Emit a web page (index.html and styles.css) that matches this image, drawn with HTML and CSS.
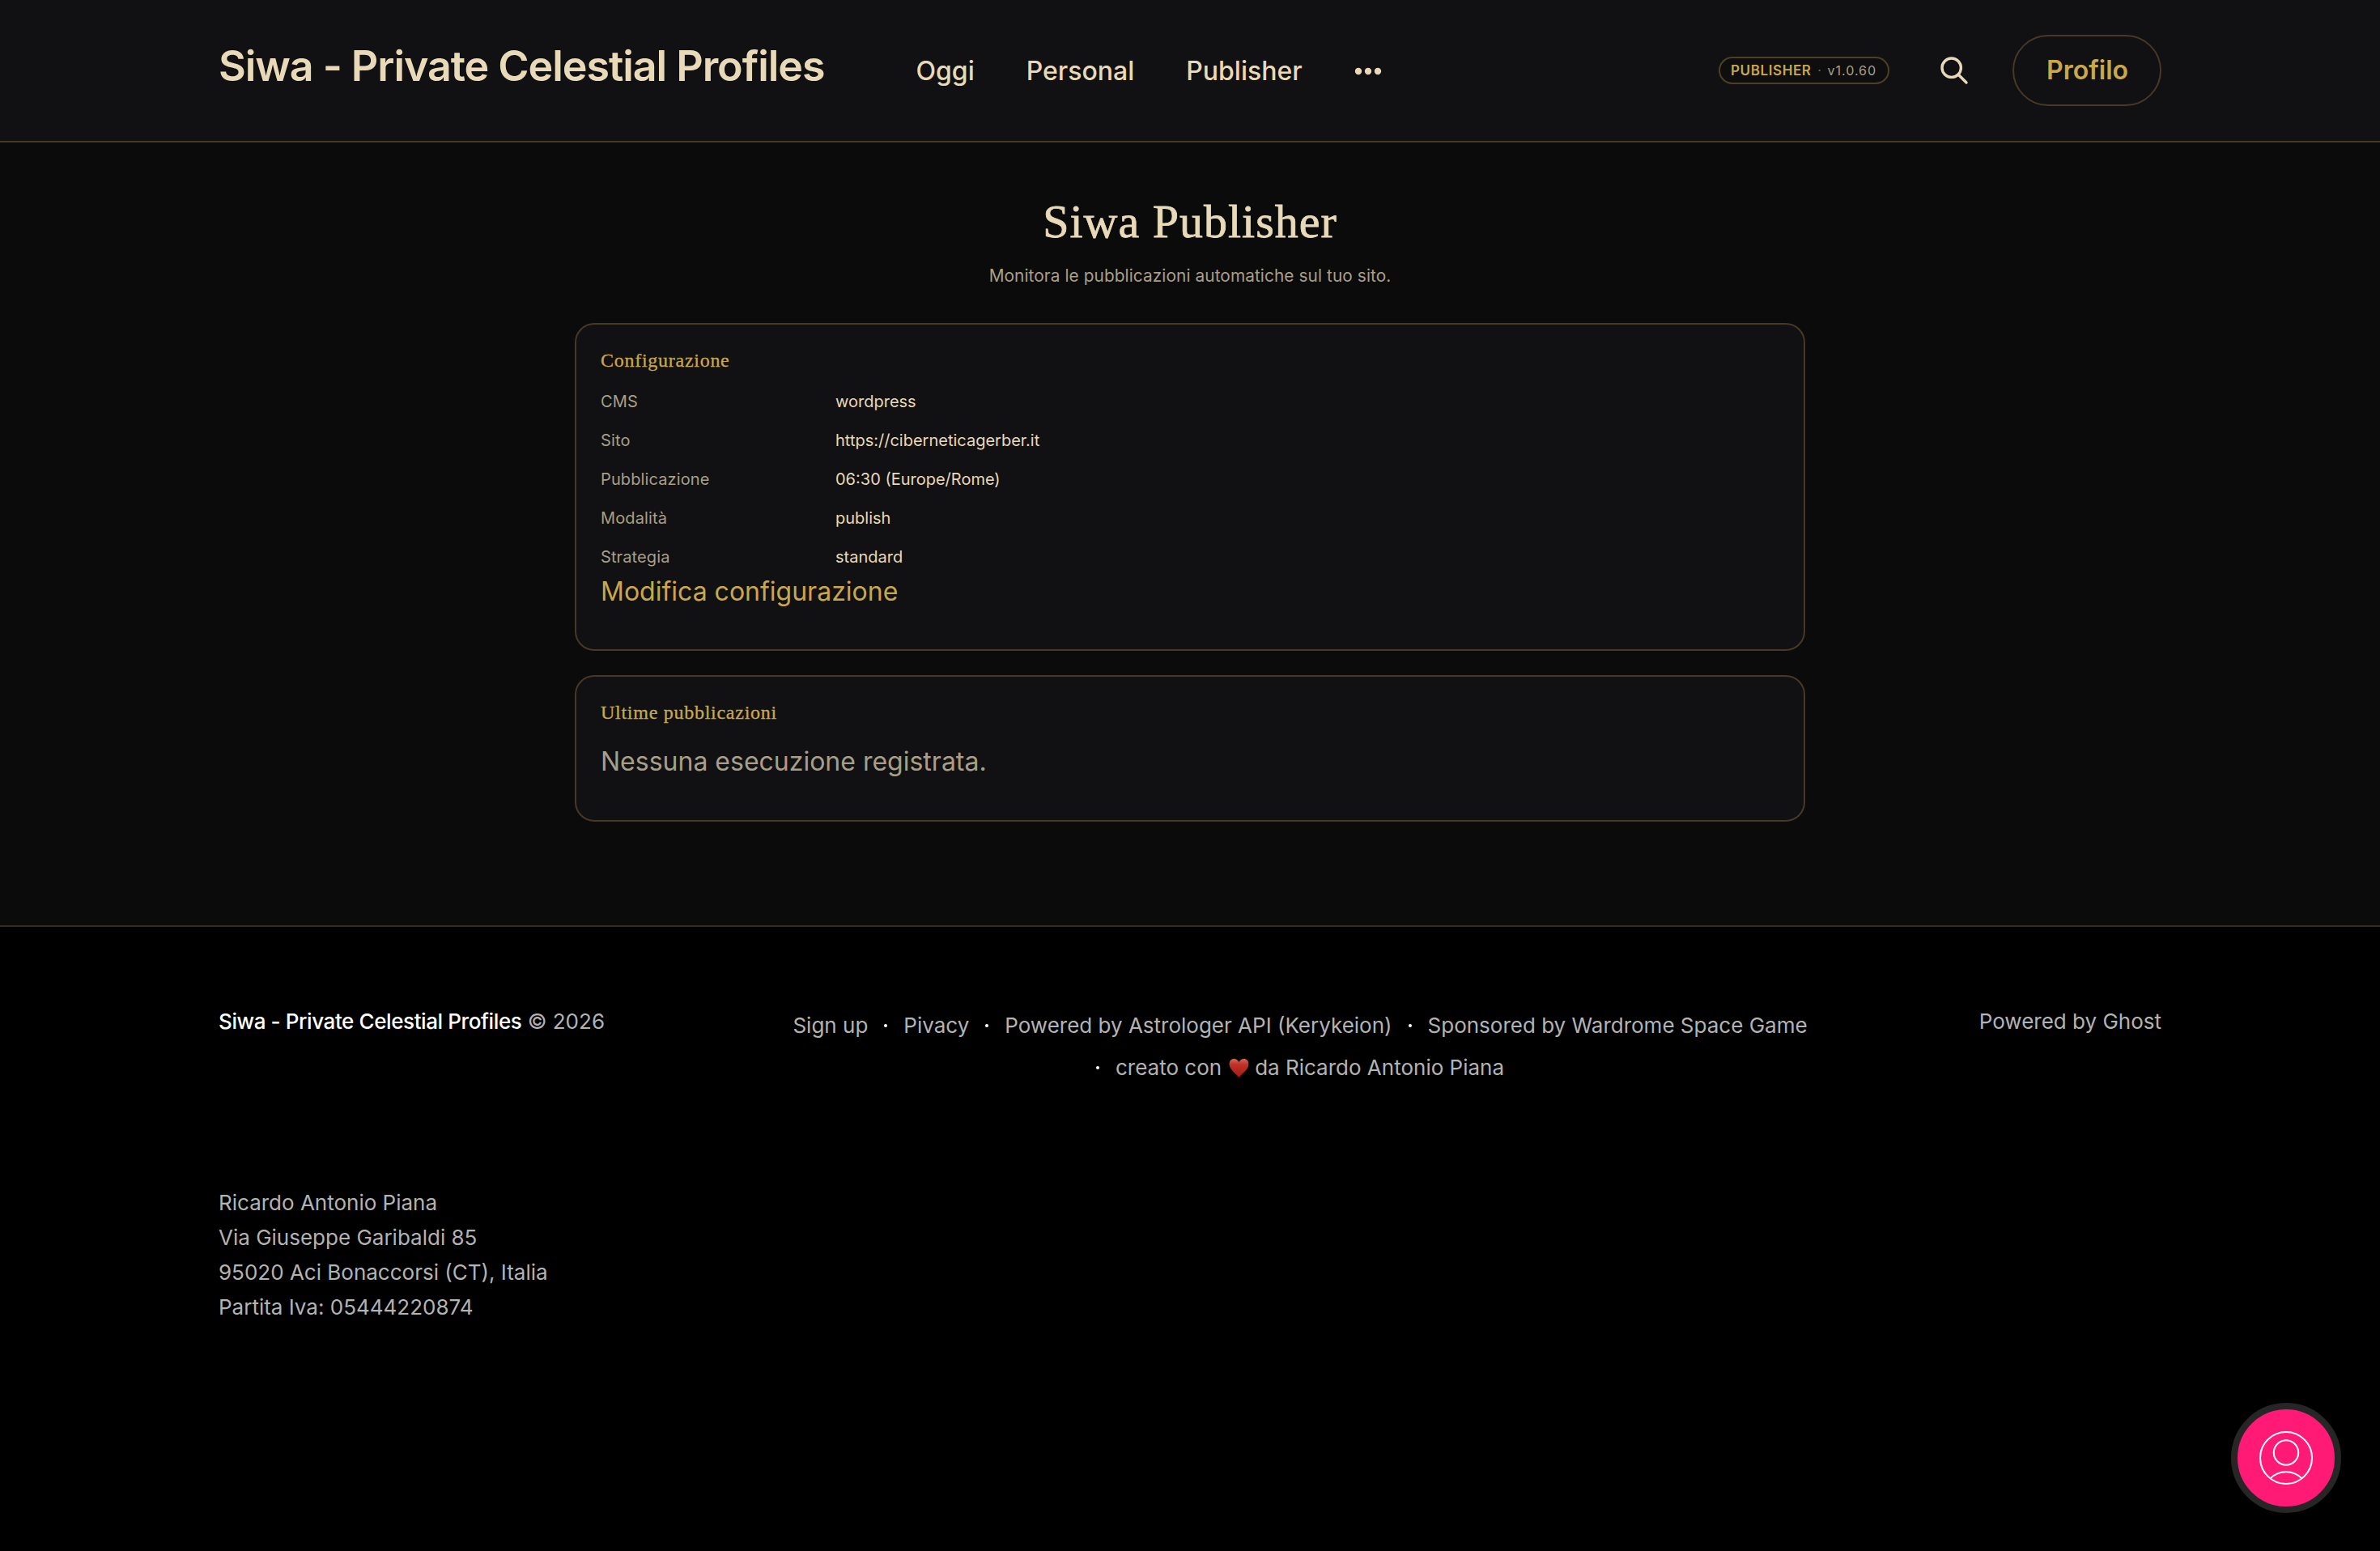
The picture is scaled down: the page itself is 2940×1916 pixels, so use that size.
FILE: index.html
```html
<!DOCTYPE html>
<html lang="it">
<head>
<meta charset="utf-8">
<title>Siwa - Private Celestial Profiles</title>
<link rel="stylesheet" href="styles.css">
</head>
<body>
<header class="header">
  <a class="logo">Siwa - Private Celestial Profiles</a>
  <nav class="nav">
    <a class="nav-link">Oggi</a>
    <a class="nav-link">Personal</a>
    <a class="nav-link">Publisher</a>
    <svg class="more" width="34" height="10" viewBox="0 0 34 10"><circle cx="5" cy="5" r="4.2"/><circle cx="17" cy="5" r="4.2"/><circle cx="29" cy="5" r="4.2"/></svg>
  </nav>
  <div class="actions">
    <span class="chip"><b class="chip-name">PUBLISHER</b><i class="chip-sep">·</i><span class="chip-version">v1.0.60</span></span>
    <svg class="search" width="36" height="36" viewBox="0 0 36 36"><circle cx="14.7" cy="14.7" r="11.7"/><path d="M23 23 33 33"/></svg>
    <a class="profile">Profilo</a>
  </div>
</header>
<main class="main">
  <h1 class="title">Siwa Publisher</h1>
  <p class="subtitle">Monitora le pubblicazioni automatiche sul tuo sito.</p>
  <section class="card card-config">
    <h2 class="card-title">Configurazione</h2>
    <dl class="rows">
      <dt>CMS</dt><dd>wordpress</dd>
      <dt>Sito</dt><dd>https://ciberneticagerber.it</dd>
      <dt>Pubblicazione</dt><dd>06:30 (Europe/Rome)</dd>
      <dt>Modalità</dt><dd>publish</dd>
      <dt>Strategia</dt><dd>standard</dd>
    </dl>
    <a class="edit">Modifica configurazione</a>
  </section>
  <section class="card card-runs">
    <h2 class="card-title">Ultime pubblicazioni</h2>
    <p class="empty">Nessuna esecuzione registrata.</p>
  </section>
</main>
<footer class="footer">
  <div class="footer-top">
    <div class="copyright"><span class="site-name">Siwa - Private Celestial Profiles</span> <span class="year">© 2026</span></div>
    <nav class="footer-nav">
      <a class="flink">Sign up</a><a class="flink">Pivacy</a><a class="flink">Powered by Astrologer API (Kerykeion)</a><a class="flink">Sponsored by Wardrome Space Game</a><a class="flink"><span>creato con</span><svg class="heart" width="25" height="25" viewBox="0 0 26 26"><defs><linearGradient id="heart-fill" x1="0" y1="0" x2="0" y2="1"><stop offset="0" stop-color="#d8685c"/><stop offset=".3" stop-color="#c23227"/><stop offset="1" stop-color="#a31a12"/></linearGradient></defs><path fill="url(#heart-fill)" d="M13 25C9 20 .6 15 .6 7.600 .6 3.500 3.200 1 6.600 1 9.500 1 12 2.800 13 5.600 14 2.800 16.500 1 19.400 1 22.800 1 25.400 3.500 25.400 7.600 25.400 15 17 20 13 25Z"/></svg><span>da Ricardo Antonio Piana</span></a>
    </nav>
    <div class="powered">Powered by Ghost</div>
  </div>
  <address class="address">Ricardo Antonio Piana<br>Via Giuseppe Garibaldi 85<br>95020 Aci Bonaccorsi (CT), Italia<br>Partita Iva: 05444220874</address>
</footer>
<button class="portal" aria-label="Account">
  <svg width="70" height="70" viewBox="0 0 70 70"><circle cx="35" cy="35" r="32"/><circle cx="35" cy="28.500" r="15.200"/><path d="M15.500 60.500C26 49.500 44 49.500 54.500 60.500"/></svg>
</button>
</body>
</html>
```
FILE: styles.css
```css
* { box-sizing: border-box; }
body { margin: 0; width: 2940px; height: 1916px; overflow: hidden; background: #000; color: #e8d9b8; font-family: Inter, "Liberation Sans", sans-serif; font-size: 32px; }
h1, h2, p, dl, dd { margin: 0; font-weight: 400; }
.header { display: flex; align-items: center; height: 176px; padding: 0 270px; background: #111113; border-bottom: 2px solid #473827; }
.logo { padding-bottom: 11px; font-size: 52px; line-height: 60px; font-weight: 600; letter-spacing: -1.06px; white-space: nowrap; }
.nav { display: flex; align-items: center; gap: 64px; margin-left: 113px; padding-top: 2px; font-weight: 500; line-height: 52px; }
.more { fill: #e8d9b8; }
.actions { display: flex; align-items: center; margin-left: auto; }
.chip { display: flex; align-items: center; width: 211px; height: 34px; padding: 0 13px; border: 2px solid #4d3f26; border-radius: 17px; background: #0e0e0f; font-size: 16px; line-height: 30px; white-space: nowrap; }
.chip-name { color: #c9a84c; font-size: 17px; font-weight: 600; letter-spacing: 0.6px; }
.chip-sep { width: 20px; text-align: center; color: #6e675a; font-style: normal; }
.chip-version { color: #a89f88; letter-spacing: 1px; }
.search { margin: 0 54px 0 62px; fill: none; stroke: #e8d9b8; stroke-width: 3.4; stroke-linecap: round; }
.profile { width: 184px; height: 88px; padding-left: 1px; border: 2px solid #473827; border-radius: 44px; color: #c9a84c; font-weight: 600; line-height: 84px; text-align: center; }
.main { height: 967px; padding: 66px 710px 0; background: #0b0b0b; }
.title { font-family: "Liberation Serif", serif; font-size: 58px; line-height: 64px; letter-spacing: 1px; text-align: center; -webkit-text-stroke: 0.8px #e8d9b8; }
.subtitle { margin: 18px 0 41px; color: #a89f88; font-size: 20.8px; line-height: 34px; letter-spacing: 0.09px; text-align: center; }
.card { padding: 29px 30px 0; border: 2px solid #473827; border-radius: 24px; background: #111113; }
.card-config { height: 405px; margin-bottom: 30px; }
.card-runs { height: 181px; }
.card-title { color: #c9a84c; font-family: "Liberation Serif", serif; font-size: 24px; line-height: 31px; letter-spacing: 0.73px; -webkit-text-stroke: 0.3px #c9a84c; }
.rows { display: grid; grid-template-columns: 290px 1fr; margin-top: 11px; font-size: 20px; line-height: 48px; }
.rows dt { color: #a89f88; letter-spacing: 0.12px; }
.edit { display: block; color: #c9a84c; line-height: 38px; }
.empty { margin-top: 19px; color: #a89f88; line-height: 52px; }
.footer { padding: 95px 270px 0; border-top: 2px solid #352b1e; color: #b3b3b3; font-size: 26px; line-height: 43px; }
.footer-top { display: grid; grid-template-columns: 697px 1278px 1fr; align-items: start; }
.site-name { color: #fff; font-weight: 500; letter-spacing: -0.4px; }
.footer-nav { display: flex; flex-wrap: wrap; justify-content: center; padding-top: 1px; line-height: 52px; }
.flink { display: flex; align-items: center; white-space: nowrap; }
.flink:last-child { margin-right: 20px; }
.flink + .flink::before { content: ""; width: 4px; height: 4px; margin: 0 20px; border-radius: 2px; background: #fff; }
.heart { margin: 0 7px 0 9px; }
.powered { text-align: right; }
.address { margin-top: 119px; font-style: normal; }
.portal { position: absolute; left: 2756px; top: 1733px; display: grid; place-items: center; width: 136px; height: 136px; padding: 0; border: 8px solid #262626; border-radius: 50%; background: #ff1a75; }
.portal svg { fill: none; stroke: #fff; stroke-width: 2; }
```
